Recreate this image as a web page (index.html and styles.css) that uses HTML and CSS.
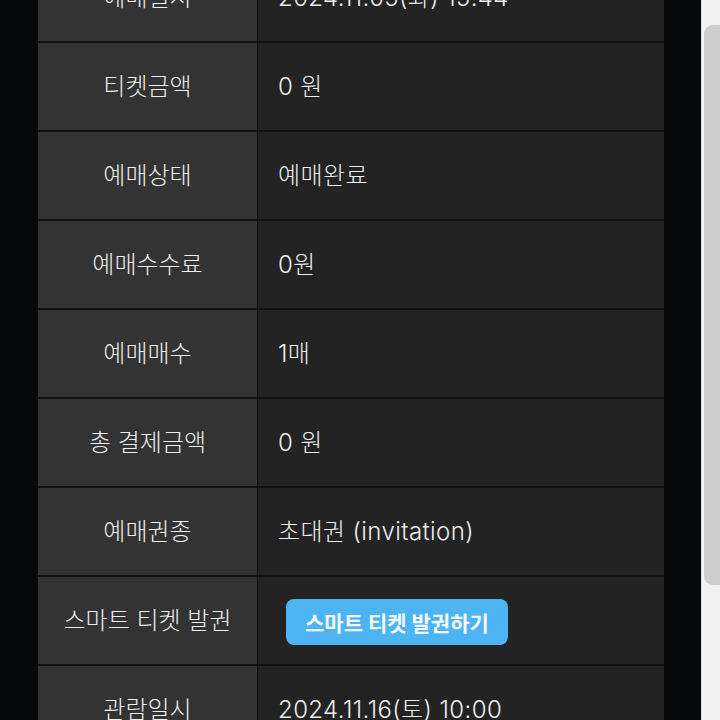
FILE: index.html
```html
<!DOCTYPE html>
<html lang="ko">
<head>
<meta charset="utf-8">
<link rel="stylesheet" href="styles.css">
</head>
<body>
<div class="screen">
  <main class="content">
    <div class="table">
      <div class="row"><div class="label">예매일시</div><div class="value">2024.11.05(화) 15:44</div></div>
      <div class="row"><div class="label">티켓금액</div><div class="value">0 원</div></div>
      <div class="row"><div class="label">예매상태</div><div class="value">예매완료</div></div>
      <div class="row"><div class="label">예매수수료</div><div class="value">0원</div></div>
      <div class="row"><div class="label">예매매수</div><div class="value">1매</div></div>
      <div class="row"><div class="label">총 결제금액</div><div class="value">0 원</div></div>
      <div class="row"><div class="label">예매권종</div><div class="value">초대권 (invitation)</div></div>
      <div class="row"><div class="label">스마트 티켓 발권</div><div class="value"><span class="btn">스마트 티켓 발권하기</span></div></div>
      <div class="row"><div class="label">관람일시</div><div class="value">2024.11.16(토) 10:00</div></div>
    </div>
  </main>
  <div class="scrollbar"><div class="thumb"></div></div>
</div>
</body>
</html>
```
FILE: styles.css
```css
html, body {
  margin: 0;
  padding: 0;
  height: 720px;
  overflow: hidden;
  background: #060809;
}
.screen {
  display: flex;
  width: 720px;
  height: 720px;
}
.content {
  width: 701px;
  flex: none;
  overflow: hidden;
  font-family: Inter, "Noto Sans CJK KR", sans-serif;
  font-weight: 300;
  color: #ededed;
}
.table {
  margin: -46px 0 0 38px;
  width: 626px;
  display: flex;
  flex-direction: column;
  background: #111;
}
.row {
  display: flex;
  height: 89px;
  border-bottom: 2px solid #111;
  box-sizing: border-box;
}
.label {
  width: 219px;
  flex: none;
  background: #333333;
  border-right: 1px solid #111;
  display: flex;
  align-items: center;
  justify-content: center;
  padding-bottom: 4px;
  font-size: 24px;
}
.value {
  flex: 1;
  background: #232323;
  display: flex;
  align-items: center;
  padding-left: 20px;
  padding-bottom: 4px;
  font-size: 24px;
  letter-spacing: 0.4px;
}
.btn {
  display: inline-flex;
  align-items: center;
  justify-content: center;
  margin: 6px 0 0 8px;
  height: 46px;
  padding: 0 19px;
  background: #4db4f4;
  color: #f4f9ff;
  font-weight: 700;
  font-size: 21px;
  letter-spacing: 0;
  border-radius: 8px;
}
.scrollbar {
  flex: 1;
  background: #f1f1f1;
  border-left: 1px solid #ddd;
  padding-top: 25px;
}
.thumb {
  height: 560px;
  margin-left: 2px;
  background: #cdcdcd;
  border-radius: 9px 0 0 9px;
}
```
